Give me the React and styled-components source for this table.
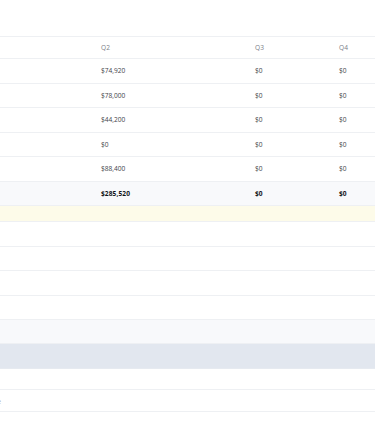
import React from "react";
import styled, { createGlobalStyle } from "styled-components";

const GlobalStyle = createGlobalStyle`
  html, body {
    margin: 0;
    padding: 0;
    background: #ffffff;
    font-family: "Open Sans", "Noto Sans", sans-serif;
  }
`;

const Page = styled.div`
  width: 375px;
  height: 437px;
  overflow: hidden;
  padding-top: 36px;
  box-sizing: border-box;
`;

const Table = styled.div`
  width: 375px;
  overflow: hidden;
  border-top: 1px solid #eef0f3;
`;

const tones = {
  total: "#f8f9fb",
  warn: "#fdfbe9",
  soft: "#f8f9fb",
  band: "#e2e7ef",
};

const Row = styled.div`
  display: grid;
  grid-template-columns: 93px 154px 84px 120px;
  width: 451px;
  height: ${(p) => p.$h}px;
  box-sizing: border-box;
  align-items: center;
  padding-top: 1px;
  background: ${(p) => tones[p.$tone] || "#ffffff"};
  border-bottom: 1px solid ${(p) => (p.$tone === "band" ? "#e6eaf0" : "#eef0f3")};
`;

const Cell = styled.div`
  padding-left: 8px;
  font-size: 6.6px;
  line-height: 1;
  white-space: nowrap;
  color: ${(p) => (p.$head ? "#7b8088" : p.$bold ? "#111418" : "#3f444b")};
  font-weight: ${(p) => (p.$bold ? 700 : 400)};
  letter-spacing: ${(p) => (p.$bold ? "0.1px" : "0")};
`;

const Label = styled.div`
  font-size: 6.6px;
  color: #9aa0a8;
  margin-left: -14px;
  white-space: nowrap;
`;

const data = [
  ["$74,920", "$0", "$0"],
  ["$78,000", "$0", "$0"],
  ["$44,200", "$0", "$0"],
  ["$0", "$0", "$0"],
  ["$88,400", "$0", "$0"],
];

export default function App() {
  return (
    <Page>
      <GlobalStyle />
      <Table>
        <Row $h={22}>
          <Cell />
          <Cell $head>Q2</Cell>
          <Cell $head>Q3</Cell>
          <Cell $head>Q4</Cell>
        </Row>
        {data.map((r, i) => (
          <Row key={i} $h={i % 2 === 0 ? 25 : 24}>
            <Cell />
            {r.map((v, j) => (
              <Cell key={j}>{v}</Cell>
            ))}
          </Row>
        ))}
        <Row $h={24} $tone="total">
          <Cell />
          <Cell $bold>$285,520</Cell>
          <Cell $bold>$0</Cell>
          <Cell $bold>$0</Cell>
        </Row>
        <Row $h={16} $tone="warn" />
        <Row $h={25} />
        <Row $h={24} />
        <Row $h={25} />
        <Row $h={24} />
        <Row $h={24} $tone="soft" />
        <Row $h={25} $tone="band" />
        <Row $h={21} />
        <Row $h={22}>
          <Label>Note</Label>
        </Row>
      </Table>
    </Page>
  );
}
